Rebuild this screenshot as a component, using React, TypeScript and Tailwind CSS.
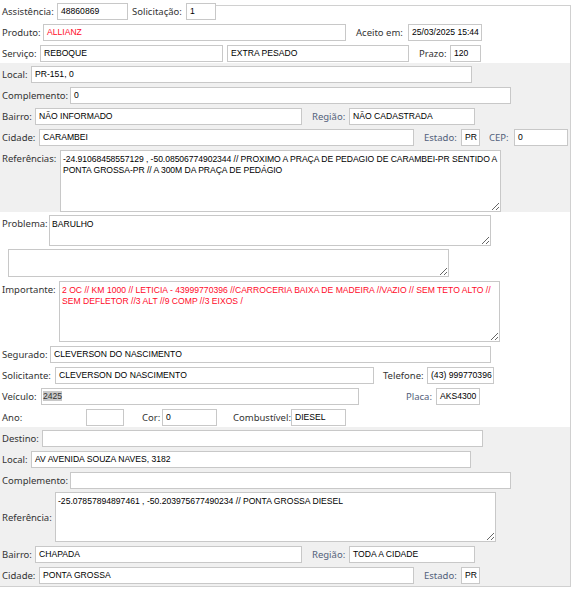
import React from "react";

const lbl =
  "shrink-0 whitespace-nowrap text-[9.5px] leading-[17px] font-['Noto_Sans','Liberation_Sans',sans-serif]";
const dark = "text-[#333333]";
const soft = "text-[#52607a]";
const box =
  "shrink-0 h-[17px] border border-[#c8c8c8] bg-white px-[3px] overflow-hidden whitespace-nowrap text-[8.6px] leading-[15px] font-['Liberation_Sans',sans-serif]";
const area =
  "block shrink-0 resize border border-[#c8c8c8] bg-white pl-[2px] pr-0 py-[3px] text-[8.6px] leading-[11px] outline-none font-['Liberation_Sans',sans-serif]";

const Row = ({ children, className = "" }: { children: React.ReactNode; className?: string }) => (
  <div className={"flex items-center pl-[2px] " + className}>{children}</div>
);

const App = () => {
  const ref1 =
    "-24.91068458557129 , -50.08506774902344 // PROXIMO A PRAÇA DE PEDAGIO DE CARAMBEI-PR SENTIDO A PONTA GROSSA-PR // A 300M DA PRAÇA DE PEDÁGIO";
  const importante =
    "2 OC // KM 1000 // LETICIA - 43999770396 //CARROCERIA BAIXA DE MADEIRA //VAZIO // SEM TETO ALTO // SEM DEFLETOR //3 ALT //9 COMP //3 EIXOS /";

  return (
    <div className="w-[575px] min-h-[603px] bg-white">
      <div className="w-[571px]">
        {/* linha 1 */}
        <div className="flex h-[20px] items-end pl-[2px]">
          <span className={`${lbl} ${dark} w-[55px]`}>Assistência:</span>
          <div className={`${box} text-black w-[71px]`}>48860869</div>
          <span className={`${lbl} ${dark} ml-[4px] w-[54px]`}>Solicitação:</span>
          <div className={`${box} text-black w-[30px]`}>1</div>
          <div className="flex-1 self-stretch mt-[5px] border-t border-r border-[#d0d0d0]" />
        </div>

        <div className="border-r border-b border-[#d0d0d0]">
          <div className="flex flex-col gap-[4px] pt-[4px] pb-[1px]">
            <Row>
              <span className={`${lbl} ${dark} w-[41px]`}>Produto:</span>
              <div className={`${box} w-[303px] text-[#ff0a2a]`}>ALLIANZ</div>
              <span className={`${lbl} ${dark} ml-[10px] w-[52px]`}>Aceito em:</span>
              <div className={`${box} text-black w-[74px]`}>25/03/2025 15:44</div>
            </Row>
            <Row>
              <span className={`${lbl} ${dark} w-[38px]`}>Serviço:</span>
              <div className={`${box} text-black w-[183px]`}>REBOQUE</div>
              <div className={`${box} text-black ml-[4px] w-[182px]`}>EXTRA PESADO</div>
              <span className={`${lbl} ${dark} ml-[10px] w-[31px]`}>Prazo:</span>
              <div className={`${box} text-black w-[31px]`}>120</div>
            </Row>
          </div>

          {/* local */}
          <div className="flex flex-col gap-[4px] bg-[#f0f0f0] pt-[3px]">
            <Row>
              <span className={`${lbl} ${dark} w-[29px]`}>Local:</span>
              <div className={`${box} text-black w-[441px]`}>PR-151, 0</div>
            </Row>
            <Row>
              <span className={`${lbl} ${dark} w-[68px]`}>Complemento:</span>
              <div className={`${box} text-black w-[441px]`}>0</div>
            </Row>
            <Row>
              <span className={`${lbl} ${dark} w-[33px]`}>Bairro:</span>
              <div className={`${box} text-black w-[267px]`}>NÃO INFORMADO</div>
              <span className={`${lbl} ${soft} ml-[10px] w-[37px]`}>Região:</span>
              <div className={`${box} text-black w-[126px]`}>NÃO CADASTRADA</div>
            </Row>
            <Row>
              <span className={`${lbl} ${dark} w-[37px]`}>Cidade:</span>
              <div className={`${box} text-black w-[375px]`}>CARAMBEI</div>
              <span className={`${lbl} ${soft} ml-[10px] w-[37px]`}>Estado:</span>
              <div className={`${box} text-black w-[19px] px-[2px]`}>PR</div>
              <span className={`${lbl} ${soft} ml-[9px] w-[25px]`}>CEP:</span>
              <div className={`${box} text-black w-[54px]`}>0</div>
            </Row>
            <div className="flex items-start pl-[2px]">
              <span className={`${lbl} ${dark} w-[58px] leading-[12px]`}>Referências:</span>
              <textarea
                readOnly
                className={`${area} text-black tracking-[-0.06px] w-[441px] h-[62px]`}
                defaultValue={ref1}
              />
            </div>
          </div>

          {/* problema / segurado */}
          <div className="flex flex-col pt-[3px] pb-[1px]">
            <div className="flex items-start pl-[2px]">
              <span className={`${lbl} ${dark} w-[47px] leading-[14px]`}>Problema:</span>
              <textarea readOnly className={`${area} text-black w-[442px] h-[31px]`} defaultValue="BARULHO" />
            </div>
            <div className="pl-[8px] mt-[3px]">
              <textarea readOnly className={`${area} text-black w-[441px] h-[28px]`} defaultValue="" />
            </div>
            <div className="flex items-start pl-[2px] mt-[4px]">
              <span className={`${lbl} ${dark} w-[57px] leading-[14px]`}>Importante:</span>
              <textarea
                readOnly
                className={`${area} w-[441px] h-[61px] text-[#ff0a2a]`}
                defaultValue={importante}
              />
            </div>
            <Row className="mt-[4px]">
              <span className={`${lbl} ${dark} w-[48px]`}>Segurado:</span>
              <div className={`${box} text-black w-[441px]`}>CLEVERSON DO NASCIMENTO</div>
            </Row>
            <Row className="mt-[4px]">
              <span className={`${lbl} ${dark} w-[53px]`}>Solicitante:</span>
              <div className={`${box} text-black w-[319px]`}>CLEVERSON DO NASCIMENTO</div>
              <span className={`${lbl} ${dark} ml-[9px] w-[44px]`}>Telefone:</span>
              <div className={`${box} text-black w-[67px] pr-0`}>(43) 999770396</div>
            </Row>
            <Row className="mt-[4px]">
              <span className={`${lbl} ${dark} w-[39px]`}>Veículo:</span>
              <div className={`${box} text-black w-[318px] pl-[1px]`}>
                <span className="bg-[#c8c8c8] text-[#333333]">2425</span>
              </div>
              <span className={`${lbl} ${soft} ml-[47px] w-[30px]`}>Placa:</span>
              <div className={`${box} text-black w-[44px]`}>AKS4300</div>
            </Row>
            <Row className="mt-[4px]">
              <span className={`${lbl} ${dark} w-[84px]`}>Ano:</span>
              <div className={`${box} w-[38px]`} />
              <span className={`${lbl} ${dark} ml-[18px] w-[20px]`}>Cor:</span>
              <div className={`${box} text-black w-[55px]`}>0</div>
              <span className={`${lbl} ${dark} ml-[16px] w-[58px]`}>Combustível:</span>
              <div className={`${box} text-black w-[55px]`}>DIESEL</div>
            </Row>
          </div>

          {/* destino */}
          <div className="flex flex-col bg-[#f0f0f0] pt-[3px] pb-[2px]">
            <Row>
              <span className={`${lbl} ${dark} w-[40px]`}>Destino:</span>
              <div className={`${box} w-[441px]`} />
            </Row>
            <Row className="mt-[4px]">
              <span className={`${lbl} ${dark} w-[29px]`}>Local:</span>
              <div className={`${box} text-black w-[440px]`}>AV AVENIDA SOUZA NAVES, 3182</div>
            </Row>
            <Row className="mt-[4px]">
              <span className={`${lbl} ${dark} w-[68px]`}>Complemento:</span>
              <div className={`${box} w-[441px]`} />
            </Row>
            <Row className="mt-[3px]">
              <span className={`${lbl} ${dark} w-[53px]`}>Referência:</span>
              <textarea
                readOnly
                className={`${area} text-black w-[441px] h-[50px]`}
                defaultValue="-25.07857894897461 , -50.203975677490234 // PONTA GROSSA DIESEL"
              />
            </Row>
            <Row className="mt-[4px]">
              <span className={`${lbl} ${dark} w-[33px]`}>Bairro:</span>
              <div className={`${box} text-black w-[267px]`}>CHAPADA</div>
              <span className={`${lbl} ${soft} ml-[10px] w-[37px]`}>Região:</span>
              <div className={`${box} text-black w-[126px]`}>TODA A CIDADE</div>
            </Row>
            <Row className="mt-[4px]">
              <span className={`${lbl} ${dark} w-[37px]`}>Cidade:</span>
              <div className={`${box} text-black w-[375px]`}>PONTA GROSSA</div>
              <span className={`${lbl} ${soft} ml-[10px] w-[37px]`}>Estado:</span>
              <div className={`${box} text-black w-[19px] px-[2px]`}>PR</div>
            </Row>
          </div>
        </div>
      </div>
    </div>
  );
};

export default App;
